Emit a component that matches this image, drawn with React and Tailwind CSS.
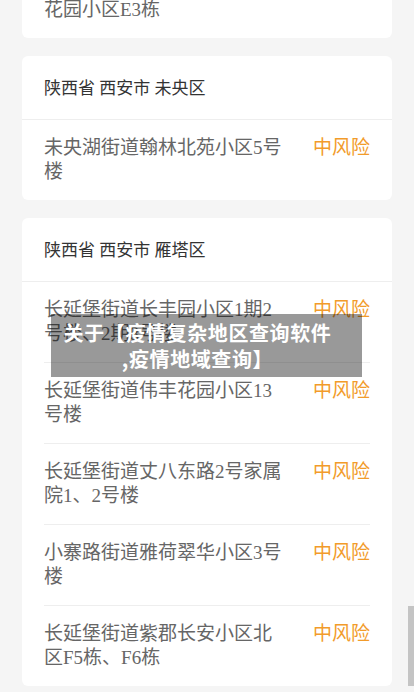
const areas = [
  {
    title: '陕西省 西安市 未央区',
    items: [{ name: '未央湖街道翰林北苑小区5号楼', level: '中风险' }],
  },
  {
    title: '陕西省 西安市 雁塔区',
    items: [
      { name: '长延堡街道长丰园小区1期2号楼、2期8号楼', level: '中风险' },
      { name: '长延堡街道伟丰花园小区13号楼', level: '中风险' },
      { name: '长延堡街道丈八东路2号家属院1、2号楼', level: '中风险' },
      { name: '小寨路街道雅荷翠华小区3号楼', level: '中风险' },
      { name: '长延堡街道紫郡长安小区北区F5栋、F6栋', level: '中风险' },
    ],
  },
];

const font = { fontFamily: '"Liberation Serif", "Noto Sans CJK SC", serif' };

function RiskRow({ name, level, first }) {
  return (
    <div className={`flex justify-between items-start py-4 ${first ? '' : 'border-t border-[#eeeeee]'}`}>
      <div className="w-[242px] text-[19px] leading-6 text-[#666666]">{name}</div>
      <div className="text-[19px] leading-6 text-[#f29b2a]">{level}</div>
    </div>
  );
}

function AreaCard({ title, items }) {
  return (
    <div className="bg-white rounded-md">
      <div className="px-[22px] pt-[21px] pb-[18px] text-[17px] leading-6 text-[#333333] border-b border-[#eeeeee]">
        {title}
      </div>
      <div className="mx-[22px]">
        {items.map((item, i) => (
          <RiskRow key={i} {...item} first={i === 0} />
        ))}
      </div>
    </div>
  );
}

export default function App() {
  return (
    <div className="relative h-[692px] overflow-hidden bg-[#f5f5f5]" style={font}>
      <div className="-mt-[18px] px-[22px] flex flex-col gap-[18px]">
        {/* tail of the previous card, cut off by the top edge */}
        <div className="bg-white rounded-md">
          <div className="mx-[22px] py-4 text-[19px] leading-6 text-[#666666]">花园小区E3栋</div>
        </div>
        {areas.map((area, i) => (
          <AreaCard key={i} {...area} />
        ))}
      </div>

      <div className="absolute left-[51px] top-[314px] w-[311px] h-[63px] pr-[18px] bg-black/40 flex flex-col items-center justify-center">
        <p className="text-white font-bold text-[20px] leading-[26px] tracking-[0.6px] text-center font-['Noto_Sans_CJK_SC',sans-serif]">
          关于【疫情复杂地区查询软件
          <br />
          ,疫情地域查询】
        </p>
      </div>

      <div className="absolute right-0 top-[606px] w-[6px] h-[80px] bg-[#c4c4c4]" />
    </div>
  );
}
